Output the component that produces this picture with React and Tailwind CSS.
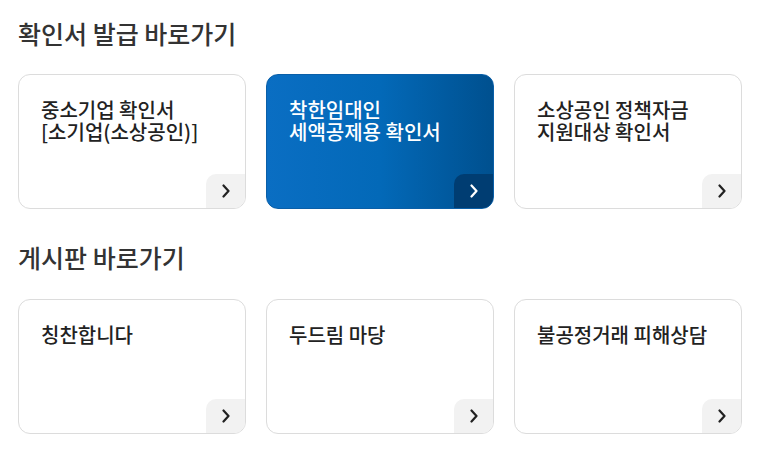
import React from "react"

const font = { fontFamily: '"Noto Sans CJK KR", "Noto Sans", sans-serif' }

function Chevron({ light }) {
    return (
        <svg width="10" height="14" viewBox="0 0 10 14" fill="none">
            <path d="M2.5 1.5L7.5 7L2.5 12.5" stroke={light ? "#ffffff" : "#222222"} strokeWidth="2.2" strokeLinecap="round" strokeLinejoin="round" />
        </svg>
    )
}

function Card({ lines, active }) {
    return (
        <a
            href="#"
            className={
                "relative block w-[228px] h-[135px] rounded-[12px] overflow-hidden border " +
                (active
                    ? "border-[#0a5fa8] bg-gradient-to-r from-[#0a6ec3] via-[#0369b8] to-[#00508f] text-white"
                    : "border-[#dcdcdc] bg-white text-[#222]")
            }
        >
            <div className="pl-[22px] pt-[24px] text-[20px] leading-[22px] font-medium">
                {lines.map((l, i) => (
                    <div key={i}>{l}</div>
                ))}
            </div>
            <div
                className={
                    "absolute right-0 bottom-0 w-[39px] h-[34px] rounded-tl-[10px] flex items-center justify-center " +
                    (active ? "bg-[#003d72]" : "bg-[#f2f2f2]")
                }
            >
                <Chevron light={active} />
            </div>
        </a>
    )
}

export default function App() {
    const certs = [
        { lines: ["중소기업 확인서", "[소기업(소상공인)]"] },
        { lines: ["착한임대인", "세액공제용 확인서"], active: true },
        { lines: ["소상공인 정책자금", "지원대상 확인서"] },
    ]
    const boards = [
        { lines: ["칭찬합니다"] },
        { lines: ["두드림 마당"] },
        { lines: ["불공정거래 피해상담"] },
    ]
    return (
        <div className="w-[771px] h-[464px] bg-white pl-[18px]" style={font}>
            <h2 className="pt-[17px] text-[25px] leading-[32px] font-medium text-[#333]">확인서 발급 바로가기</h2>
            <div className="mt-[25px] flex gap-[20px]">
                {certs.map((c, i) => (
                    <Card key={i} {...c} />
                ))}
            </div>
            <h2 className="mt-[32px] text-[25px] leading-[32px] font-medium text-[#333]">게시판 바로가기</h2>
            <div className="mt-[26px] flex gap-[20px]">
                {boards.map((c, i) => (
                    <Card key={i} {...c} />
                ))}
            </div>
        </div>
    )
}
